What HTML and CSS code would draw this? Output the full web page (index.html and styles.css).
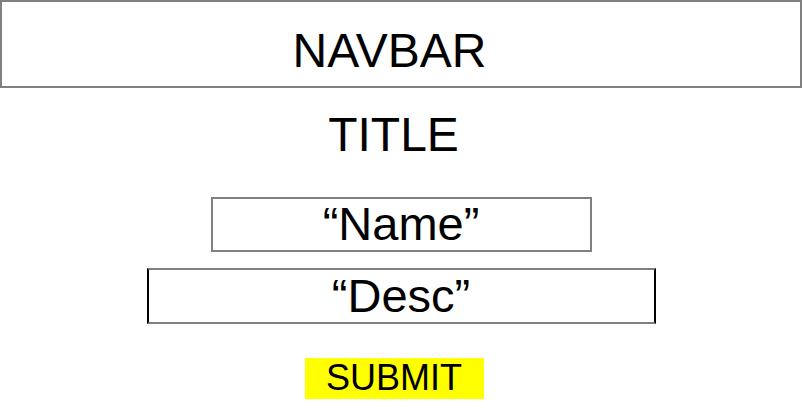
FILE: index.html
```html
<!DOCTYPE html>
<html>
<head>
<meta charset="utf-8">
<link rel="stylesheet" href="styles.css">
</head>
<body>
<div class="navbar">NAVBAR</div>
<main class="content">
  <h1 class="title">TITLE</h1>
  <div class="field field-name">“Name”</div>
  <div class="field field-desc">“Desc”</div>
  <button class="submit">SUBMIT</button>
</main>
</body>
</html>
```

FILE: styles.css
```css
html, body {
  margin: 0;
  padding: 0;
  background: #ffffff;
}
body {
  font-family: "Liberation Sans", Arial, sans-serif;
  color: #000000;
  width: 802px;
  height: 409px;
  overflow: hidden;
}
.navbar {
  box-sizing: border-box;
  height: 88px;
  width: 802px;
  border: 2px solid #808080;
  padding: 25px 23px 0 0;
  font-size: 48px;
  line-height: 1;
  text-align: center;
}
.content {
  display: flex;
  flex-direction: column;
  align-items: center;
}
.title {
  margin: 23px 15px 0 0;
  font-size: 48px;
  font-weight: normal;
  line-height: 1;
}
.field {
  box-sizing: border-box;
  font-size: 47px;
  line-height: 1;
  text-align: center;
  border: 2px solid #808080;
}
.field-name {
  width: 381px;
  height: 55px;
  margin-top: 38px;
  padding-top: 1px;
}
.field-desc {
  width: 509px;
  height: 56px;
  margin-top: 16px;
  padding-top: 2px;
  border-left-color: #000000;
  border-right-color: #000000;
}
.submit {
  box-sizing: border-box;
  width: 179px;
  height: 41px;
  margin: 34px 14px 0 0;
  padding: 2px 0 0 0;
  border: none;
  background: #ffff00;
  font-family: "Liberation Sans", Arial, sans-serif;
  font-size: 36px;
  line-height: 1;
  color: #000000;
  display: flex;
  justify-content: center;
  align-items: flex-start;
}
```
